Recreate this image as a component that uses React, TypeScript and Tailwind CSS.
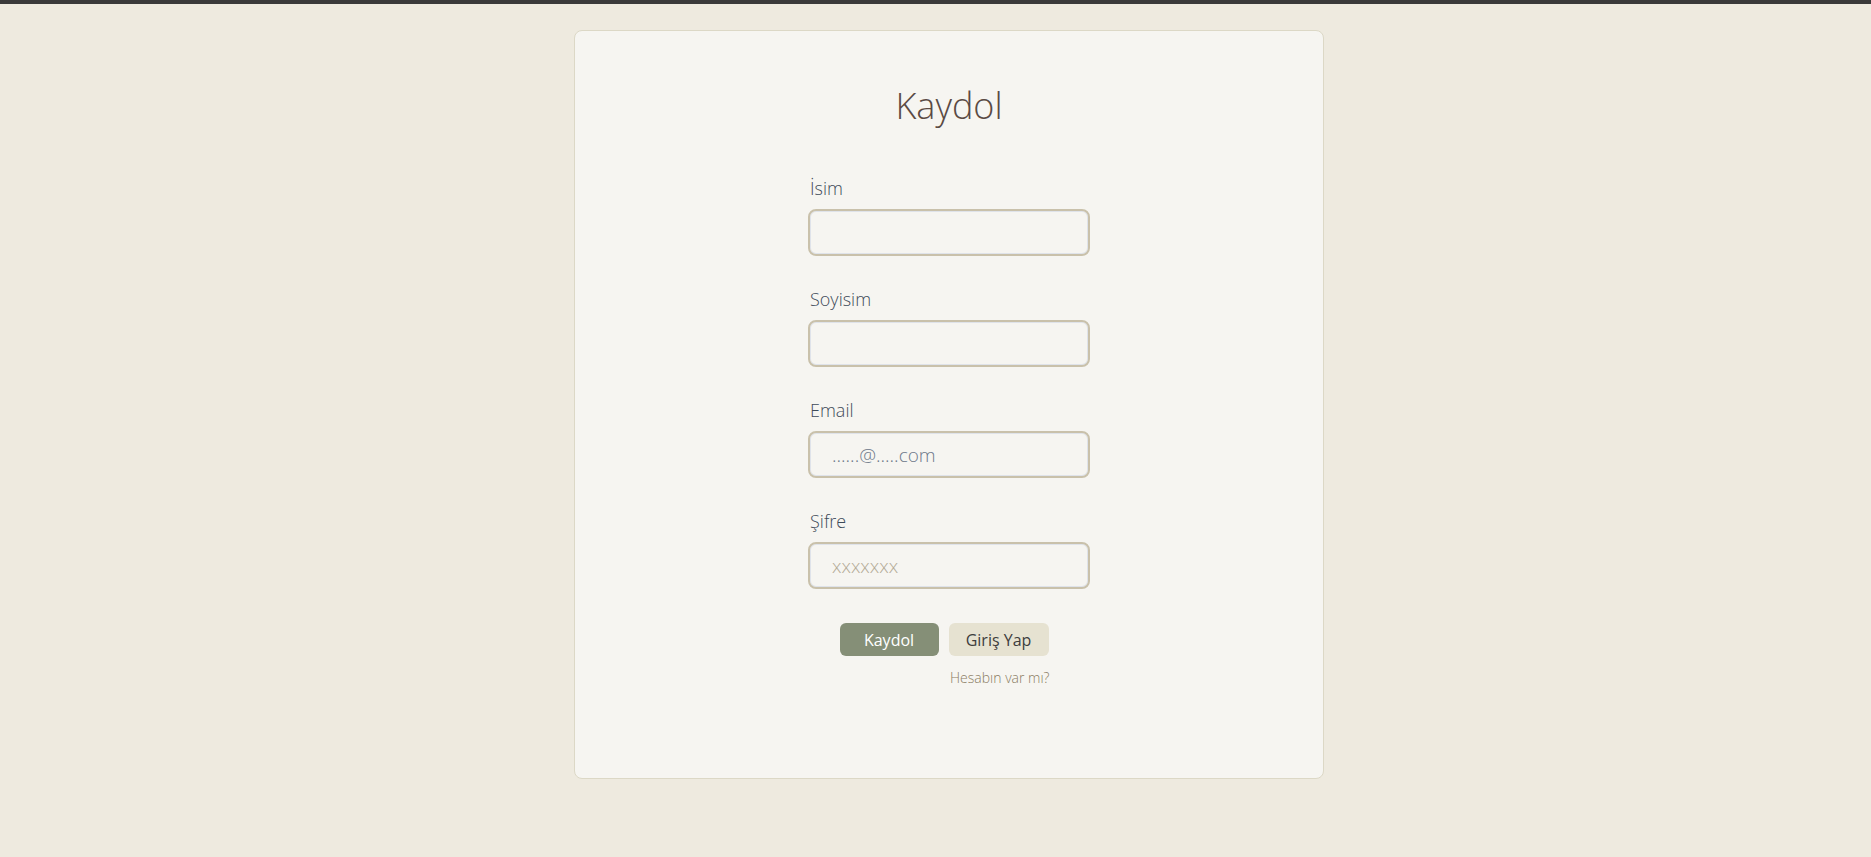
export default function App() {
  const fields = [
    { label: 'İsim', type: 'text', placeholder: '', tone: '' },
    { label: 'Soyisim', type: 'text', placeholder: '', tone: '' },
    { label: 'Email', type: 'email', placeholder: '......@.....com', tone: 'placeholder:text-[#6d7889]' },
    { label: 'Şifre', type: 'password', placeholder: 'xxxxxxx', tone: 'placeholder:text-[#b3aa95]' },
  ]

  return (
    <div className="min-h-screen bg-[#eeeadf] font-['Open_Sans',sans-serif]">
      <div className="h-[4px] bg-[#3a3a3a]" />
      <div className="flex justify-center pl-[27px]">
        <div className="mt-[26px] w-[750px] h-[749px] bg-[#f6f5f1] border border-[#dcd8c6] rounded-lg">
          <h1 className="pt-[51px] text-center text-[36px] font-light text-[#5a4a44] leading-[48px]">Kaydol</h1>
          <form className="mx-auto mt-[45px] w-[282px] flex flex-col gap-[30px]" onSubmit={(e) => e.preventDefault()}>
            {fields.map((f) => (
              <div key={f.label} className="flex flex-col">
                <label className="pl-[2px] text-[18px] font-light text-[#3e4b59] leading-[26px] mb-[8px]">{f.label}</label>
                <input
                  type={f.type}
                  placeholder={f.placeholder}
                  className={`h-[47px] w-full rounded-lg border-2 border-[#c9c1ab] bg-[#f6f5f1] px-[22px] text-[19px] font-light outline-none shadow-[inset_0_0_0_1px_#dfe3ea] ${f.tone}`}
                />
              </div>
            ))}
            <div className="flex flex-col items-center mt-[4px]">
              <div className="flex gap-[10px] pr-[10px]">
                <button className="w-[99px] h-[33px] rounded-md bg-[#858f77] text-white text-[16px]">Kaydol</button>
                <button className="w-[100px] h-[33px] rounded-md bg-[#e6e2d1] text-[#3d3d3d] text-[16px]">Giriş Yap</button>
              </div>
              <div className="w-[209px] pr-[4px] text-right mt-[11px] text-[14px] font-light text-[#8a7c62]">Hesabın var mı?</div>
            </div>
          </form>
        </div>
      </div>
    </div>
  )
}
